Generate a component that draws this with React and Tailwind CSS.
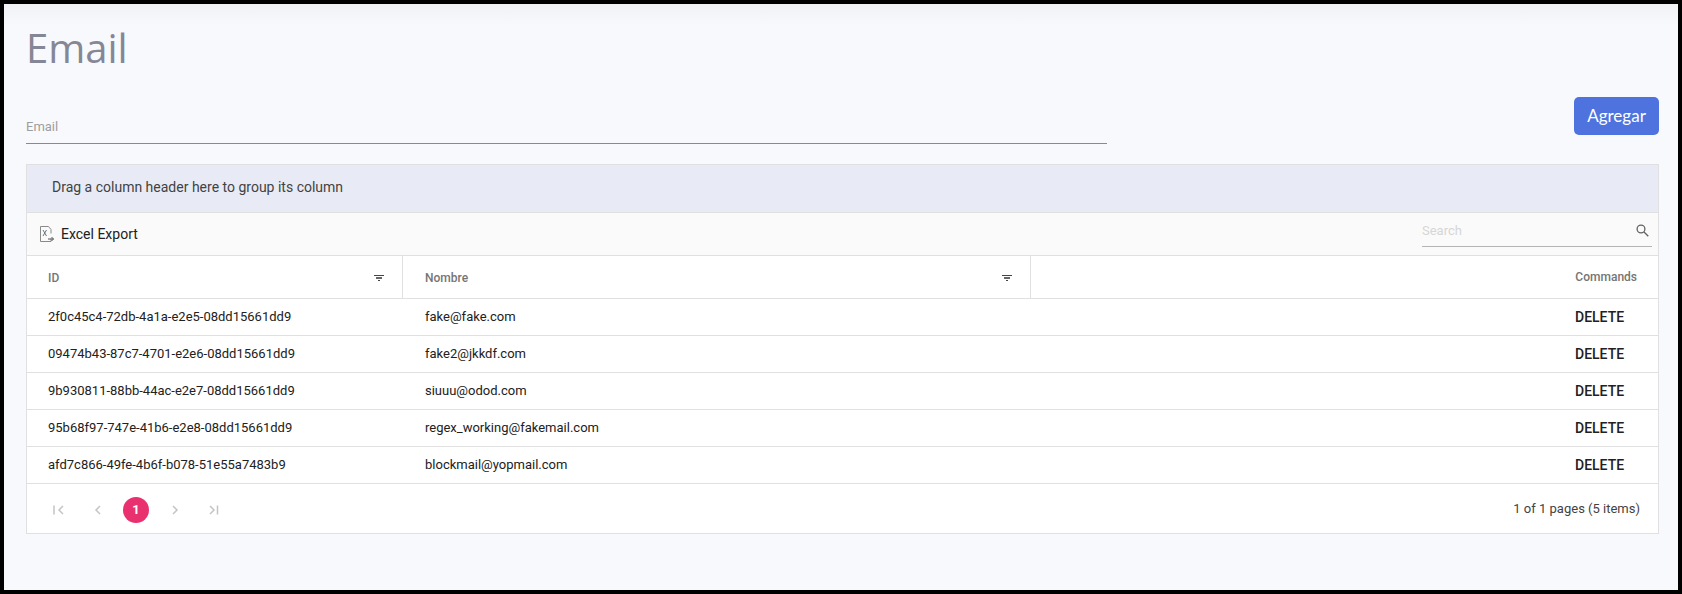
const rows = [
  ['2f0c45c4-72db-4a1a-e2e5-08dd15661dd9', 'fake@fake.com'],
  ['09474b43-87c7-4701-e2e6-08dd15661dd9', 'fake2@jkkdf.com'],
  ['9b930811-88bb-44ac-e2e7-08dd15661dd9', 'siuuu@odod.com'],
  ['95b68f97-747e-41b6-e2e8-08dd15661dd9', 'regex_working@fakemail.com'],
  ['afd7c866-49fe-4b6f-b078-51e55a7483b9', 'blockmail@yopmail.com'],
]

function FilterIcon() {
  return (
    <svg width="10" height="6" viewBox="0 0 10 6" className="shrink-0 mt-[2px]">
      <rect x="0" y="0" width="10" height="1" fill="#444" />
      <rect x="2" y="2" width="6" height="2" fill="#666" />
      <rect x="4" y="5" width="2" height="1" fill="#444" />
    </svg>
  )
}

function ExcelIcon() {
  return (
    <svg width="14" height="16" viewBox="0 0 14 16" fill="none" className="shrink-0">
      <path d="M.5.5h8l2.5 3v4M11 12.5v3H.5V.5" stroke="#8a8a8a" strokeWidth="1" />
      <path d="M3 4l3.5 6M6.5 4L3 10" stroke="#6b7280" strokeWidth="1" />
      <path d="M8 13h5.5M11.5 11l2 2-2 2" stroke="#555" strokeWidth="1" />
    </svg>
  )
}

function PagerIcon({ d }) {
  return (
    <svg width="12" height="12" viewBox="0 0 12 12" fill="none" stroke="#c4c4c4" strokeWidth="1.5" className="shrink-0">
      <path d={d} />
    </svg>
  )
}

function Th({ label, width, pad, filter }) {
  return (
    <div className={`${width} ${pad} shrink-0 h-full flex items-center justify-between pr-[18px] border-r border-[#e0e0e0]`}>
      <span className="text-[12px] font-medium text-[#757575] mt-[2px]">{label}</span>
      {filter && <FilterIcon />}
    </div>
  )
}

export default function App() {
  return (
    <div
      className="h-[594px] border-4 border-black bg-[#f8f9fd] bg-[linear-gradient(to_bottom,#f1f2f5,#f8f9fd_22px)] pl-[22px] pr-[19px] pt-[20px] text-[#212121]"
      style={{ fontFamily: 'Roboto, sans-serif' }}
    >
      <h1 className="font-['Open_Sans',sans-serif] font-normal text-[40px] leading-[48px] text-[#858796]">Email</h1>

      <div className="flex items-start justify-between mt-[25px] h-[48px]">
        <div className="w-[1081px] h-[44px] mt-[3px] border-b border-[#8a8a8a] flex items-end pb-[9px]">
          <span className="text-[13px] leading-[14px] text-[#9e9e9e]">Email</span>
        </div>
        <button className="w-[85px] h-[38px] rounded-[5px] bg-[#4e73df] text-white font-['Lato',sans-serif] text-[17px]">
          Agregar
        </button>
      </div>

      <div className="mt-[19px] border border-[#e0e0e0] bg-white">
        <div className="h-[48px] flex items-center pl-[25px] pb-[2px] bg-[#e8ebf6] border-b border-[#e0e0e0] text-[14px] text-[#424242]">
          Drag a column header here to group its column
        </div>

        <div className="h-[43px] flex items-center justify-between pl-[13px] pr-[6px] bg-[#fafafa] border-b border-[#e0e0e0]">
          <div className="flex items-center gap-[7px] text-[14px] text-[#212121]">
            <ExcelIcon />
            Excel Export
          </div>
          <div className="w-[230px] h-[32px] mb-[6px] flex items-center justify-between border-b border-[#b5b5b5] pr-[3px]">
            <span className="text-[13px] text-[#d6d6d6]">Search</span>
            <svg width="13" height="13" viewBox="0 0 13 13" fill="none" stroke="#616161" strokeWidth="1.3">
              <circle cx="5" cy="5" r="3.9" />
              <path d="M8 8l4.3 4.3" />
            </svg>
          </div>
        </div>

        <div className="h-[43px] flex items-center border-b border-[#e0e0e0]">
          <Th label="ID" width="w-[376px]" pad="pl-[21px]" filter />
          <Th label="Nombre" width="w-[628px]" pad="pl-[22px]" filter />
          <div className="flex-1 text-right pr-[21px] text-[12px] font-medium text-[#757575]">Commands</div>
        </div>

        {rows.map(([id, mail]) => (
          <div key={id} className="h-[37px] flex items-center border-b border-[#e0e0e0] text-[13px] text-[#212121]">
            <div className="w-[376px] pl-[21px]">{id}</div>
            <div className="w-[628px] pl-[22px]">{mail}</div>
            <div className="flex-1 pl-[544px] font-medium text-[14px]">DELETE</div>
          </div>
        ))}

        <div className="h-[49px] flex items-center justify-between pl-[26px] pr-[18px]">
          <div className="flex items-center mt-[2px]">
            <PagerIcon d="M1 1.5v9M10 2L6 6l4 4" />
            <div className="ml-[27px]"><PagerIcon d="M8 2L4 6l4 4" /></div>
            <div className="ml-[19px] w-[26px] h-[26px] rounded-full bg-[#e9316f] text-white text-[13px] font-bold flex items-center justify-center">1</div>
            <div className="ml-[20px]"><PagerIcon d="M4 2l4 4-4 4" /></div>
            <div className="ml-[27px]"><PagerIcon d="M2 2l4 4-4 4M9.5 1.5v9" /></div>
          </div>
          <span className="text-[13px] text-[#424242]">1 of 1 pages (5 items)</span>
        </div>
      </div>
    </div>
  )
}
